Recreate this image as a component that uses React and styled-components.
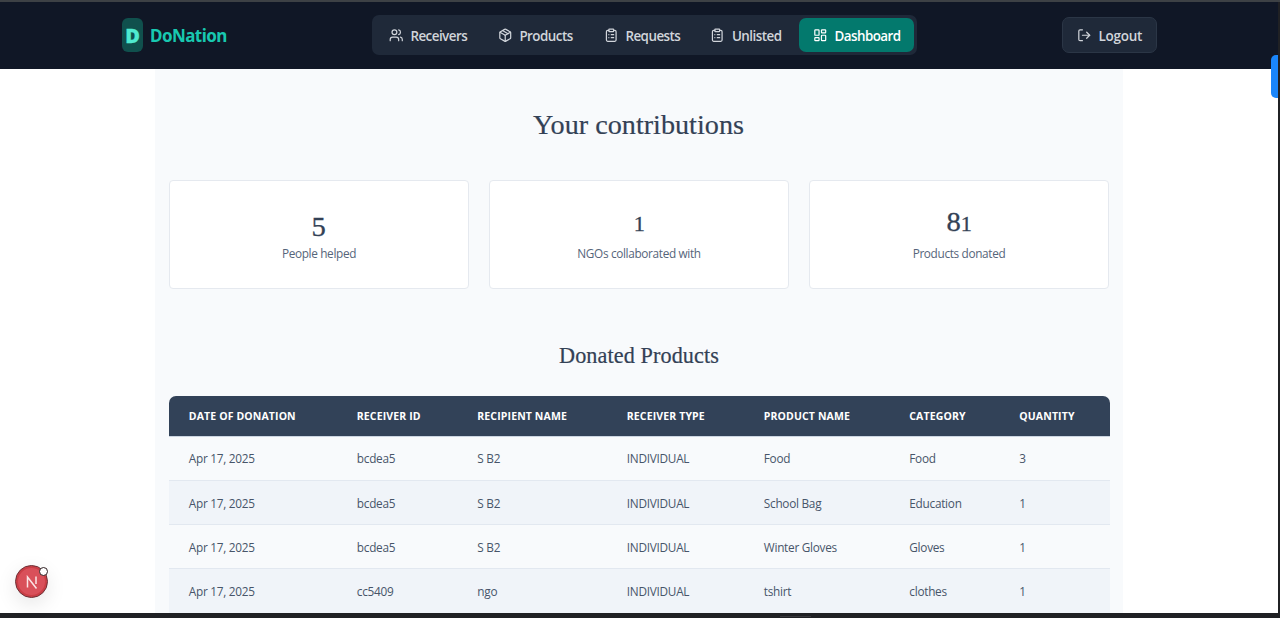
import React from "react";
import styled, { createGlobalStyle } from "styled-components";
import { Users, Package, ClipboardList, LayoutDashboard, LogOut } from "lucide-react";

const sans = '"Noto Sans", "Open Sans", sans-serif';
const openSans = '"Open Sans", "Noto Sans", sans-serif';
const serif = '"Liberation Serif", serif';

const GlobalStyle = createGlobalStyle`
  *, *::before, *::after { box-sizing: border-box; }
  html, body { margin: 0; height: 618px; overflow: hidden; background: #202124; }
`;

const Frame = styled.div`
  position: relative;
  width: 1280px;
  height: 618px;
  padding: 2px 2px 5px 0;
  overflow: hidden;
  background: #202124;
  box-shadow: inset 0 2px 0 #3d4145;
  font-family: ${openSans};
`;

const Viewport = styled.div`
  height: 611px;
  overflow: hidden;
  background: #fff;
`;

const Header = styled.header`
  display: flex;
  align-items: center;
  justify-content: space-between;
  height: 67px;
  padding: 0 121px 1px 122px;
  background: #101726;
`;

const Brand = styled.div`
  display: flex;
  align-items: center;
  gap: 7px;
  width: 249px;
`;

const BrandMark = styled.span`
  width: 21px;
  height: 34px;
  padding-top: 1px;
  border-radius: 6px;
  background: #10504d;
  color: #4fead0;
  font: 800 20px/34px ${openSans};
  -webkit-text-stroke: 0.3px #4fead0;
  text-align: center;
`;

const BrandName = styled.span`
  padding-top: 2px;
  color: #18c8b0;
  font: 700 17px/24px ${sans};
  letter-spacing: -0.55px;
  white-space: nowrap;
`;

const Nav = styled.nav`
  display: flex;
  align-items: center;
  width: 545px;
  height: 40px;
  padding: 3px;
  border-radius: 7px;
  background: #1f2939;
`;

const NavItem = styled.a`
  display: flex;
  align-items: center;
  gap: 7.4px;
  flex: 0 0 ${(p) => p.$w}px;
  height: 34px;
  padding-left: 14px;
  border-radius: 7px;
  background: ${(p) => (p.$active ? "#03796d" : "transparent")};
  color: ${(p) => (p.$active ? "#fff" : "#d1d5db")};
  font: 600 13.4px/20px ${openSans};
  letter-spacing: -0.53px;
  white-space: nowrap;
  svg { flex: none; }
`;

const ButtonText = styled.span`
  padding-top: 2px;
`;

const LogoutWrap = styled.div`
  display: flex;
  justify-content: flex-end;
  width: 240px;
`;

const LogoutButton = styled.button`
  display: flex;
  align-items: center;
  gap: 7px;
  width: 95px;
  height: 36px;
  padding: 0 0 0 14px;
  border: 1px solid #2b3646;
  border-radius: 7px;
  background: #1f2939;
  color: #d1d5db;
  font: 600 13.5px/20px ${openSans};
  letter-spacing: -0.25px;
`;

const Main = styled.main`
  width: 968px;
  height: 560px;
  margin-left: 155px;
  padding: 36px 13px 0 14px;
  background: #f8fafc;
`;

const Title = styled.h1`
  margin: 0;
  padding-right: 2px;
  color: #334155;
  font: 400 28.2px/40px ${serif};
  -webkit-text-stroke: 0.2px #334155;
  text-align: center;
`;

const Cards = styled.section`
  display: grid;
  grid-template-columns: repeat(3, 300px);
  gap: 20px;
  margin-top: 35px;
`;

const Card = styled.article`
  height: 109px;
  padding-top: 26px;
  border: 1px solid #e5e9ef;
  border-radius: 4px;
  background: #fff;
  text-align: center;
`;

const Figure = styled.div`
  display: flex;
  align-items: baseline;
  justify-content: center;
  gap: 0.5px;
  height: 36px;
  color: #334155;
  font: 400 27px/34px ${serif};
`;

const Digit = styled.span`
  position: relative;
  top: ${(p) => p.$drop || 0}px;
  font-size: ${(p) => p.$size}px;
  line-height: 34px;
  transform: scaleX(1.06);
  -webkit-text-stroke: 0.3px #334155;
`;

const CardLabel = styled.div`
  color: #56657a;
  font: 400 11.8px/20px ${openSans};
  letter-spacing: -0.34px;
`;

const Subtitle = styled.h2`
  margin: 49px 0 0;
  padding-right: 1px;
  color: #334155;
  font: 400 22.2px/36px ${serif};
  letter-spacing: 0.1px;
  -webkit-text-stroke: 0.2px #334155;
  text-align: center;
`;

const Table = styled.div`
  margin-top: 22px;
  width: 941px;
  border-radius: 7px 7px 0 0;
  overflow: hidden;
`;

const Row = styled.div`
  display: grid;
  grid-template-columns: 168px 120.5px 149.5px 137px 145.5px 110px 90px;
  align-items: center;
  height: 44.3px;
  padding: 0.6px 0 0 19.8px;
  border-bottom: 1px solid #e2e8f0;
  background: ${(p) => (p.$alt ? "#f0f4f9" : "#f8fafc")};
  color: #475569;
  font: 400 11.8px/20px ${openSans};
  letter-spacing: -0.27px;
`;

const HeadRow = styled(Row)`
  height: 40.5px;
  padding-top: 1.4px;
  border-bottom: 1px solid #cbd5e1;
  background: #324258;
  color: #fff;
  font: 700 10.5px/20px ${openSans};
  letter-spacing: 0.13px;
`;

const Cell = styled.span`
  white-space: nowrap;
`;

const SideTab = styled.div`
  position: absolute;
  top: 55px;
  right: 2px;
  width: 7px;
  height: 43px;
  border-radius: 5px 0 0 5px;
  background: #1a86fb;
`;

const DevBadge = styled.div`
  position: absolute;
  left: 15.4px;
  top: 565px;
  width: 33px;
  height: 33px;
  border: 1px solid #6b3136;
  border-radius: 50%;
  background: #d9505a;
  box-shadow: inset 0 0 0 2px #ca3e46, 0 6px 20px rgba(0, 0, 0, 0.1);
  svg { display: block; margin: 9px 0 0 8.5px; }
`;

const BadgeDot = styled.span`
  position: absolute;
  top: 1.4px;
  right: -0.5px;
  width: 9px;
  height: 9px;
  border: 1px solid #2f2022;
  border-radius: 50%;
  background: #fff;
`;

const TaskbarMark = styled.div`
  position: absolute;
  left: 780px;
  bottom: 1px;
  width: 31px;
  height: 1px;
  background: #38383c;
`;

const navItems = [
  { label: "Receivers", icon: Users, w: 109 },
  { label: "Products", icon: Package, w: 106 },
  { label: "Requests", icon: ClipboardList, w: 106.5 },
  { label: "Unlisted", icon: ClipboardList, w: 102.5 },
  { label: "Dashboard", icon: LayoutDashboard, w: 115, active: true },
];

const columns = ["DATE OF DONATION", "RECEIVER ID", "RECIPIENT NAME", "RECEIVER TYPE", "PRODUCT NAME", "CATEGORY", "QUANTITY"];

const rows = [
  ["Apr 17, 2025", "bcdea5", "S B2", "INDIVIDUAL", "Food", "Food", "3"],
  ["Apr 17, 2025", "bcdea5", "S B2", "INDIVIDUAL", "School Bag", "Education", "1"],
  ["Apr 17, 2025", "bcdea5", "S B2", "INDIVIDUAL", "Winter Gloves", "Gloves", "1"],
  ["Apr 17, 2025", "cc5409", "ngo", "INDIVIDUAL", "tshirt", "clothes", "1"],
];

const stats = [
  { digits: [{ d: "5", size: 27, drop: 2.5 }], label: "People helped" },
  { digits: [{ d: "1", size: 21 }], label: "NGOs collaborated with" },
  { digits: [{ d: "8", size: 27, drop: -2 }, { d: "1", size: 21, drop: -2 }], label: "Products donated" },
];

export default function App() {
  return (
    <Frame>
      <GlobalStyle />
      <Viewport>
        <Header>
          <Brand>
            <BrandMark>D</BrandMark>
            <BrandName>DoNation</BrandName>
          </Brand>
          <Nav>
            {navItems.map(({ label, icon: Icon, w, active }) => (
              <NavItem key={label} $w={w} $active={active}>
                <Icon size={14.5} strokeWidth={2} />
                <ButtonText>{label}</ButtonText>
              </NavItem>
            ))}
          </Nav>
          <LogoutWrap>
            <LogoutButton>
              <LogOut size={14.5} />
              <ButtonText>Logout</ButtonText>
            </LogoutButton>
          </LogoutWrap>
        </Header>
        <Main>
          <Title>Your contributions</Title>
          <Cards>
            {stats.map((s) => (
              <Card key={s.label}>
                <Figure>
                  {s.digits.map((g, i) => (
                    <Digit key={i} $size={g.size} $drop={g.drop}>{g.d}</Digit>
                  ))}
                </Figure>
                <CardLabel>{s.label}</CardLabel>
              </Card>
            ))}
          </Cards>
          <Subtitle>Donated Products</Subtitle>
          <Table>
            <HeadRow>
              {columns.map((c) => <Cell key={c}>{c}</Cell>)}
            </HeadRow>
            {rows.map((r, i) => (
              <Row key={i} $alt={i % 2 === 1}>
                {r.map((c, j) => <Cell key={j}>{c}</Cell>)}
              </Row>
            ))}
          </Table>
        </Main>
      </Viewport>
      <SideTab />
      <DevBadge>
        <svg width="14" height="14" viewBox="0 0 14 14" fill="none" stroke="#fbe4e5" strokeWidth="1.5">
          <path d="M2.5 12.5V2L11.5 13.5M11 1.5V9" />
        </svg>
        <BadgeDot />
      </DevBadge>
      <TaskbarMark />
    </Frame>
  );
}
